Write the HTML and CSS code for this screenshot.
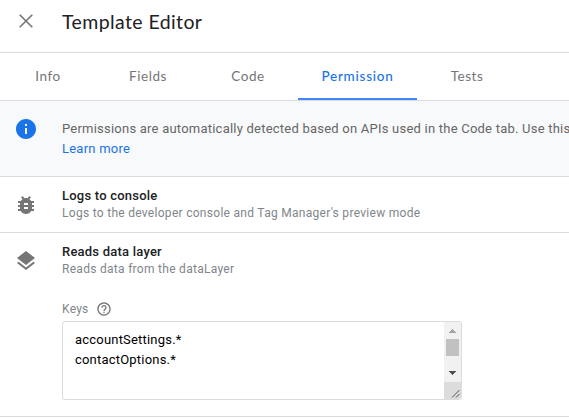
FILE: index.html
```html
<!DOCTYPE html>
<html lang="en">
<head>
<meta charset="utf-8">
<title>Template Editor</title>
<link rel="stylesheet" href="styles.css">
</head>
<body>
<header class="header">
  <svg class="close" width="14" height="14" viewBox="0 0 14 14"><path d="M.7.7l12.6 12.6M13.3.7L.7 13.3"/></svg>
  <h1 class="title">Template Editor</h1>
</header>
<nav class="tabs">
  <a class="tab first">Info</a>
  <a class="tab">Fields</a>
  <a class="tab">Code</a>
  <a class="tab active">Permission</a>
  <a class="tab">Tests</a>
</nav>
<section class="banner">
  <svg class="icon info" width="24" height="24" viewBox="0 0 24 24"><path d="M12 2C6.48 2 2 6.48 2 12s4.480 10 10 10 10-4.480 10-10S17.520 2 12 2zm1 15h-2v-6h2v6zm0-8h-2V7h2v2z"/></svg>
  <div class="message"><span class="copy">Permissions are automatically detected based on APIs used in the Code tab. Use this</span><a class="link">Learn more</a></div>
</section>
<section class="row">
  <svg class="icon" width="24" height="24" viewBox="0 0 24 24"><path d="M20 8h-2.810c-.45-.78-1.070-1.450-1.820-1.960L17 4.410 15.590 3l-2.170 2.170C12.960 5.060 12.490 5 12 5c-.49 0-.96.06-1.410.17L8.410 3 7 4.410l1.620 1.630C7.880 6.550 7.260 7.220 6.810 8H4v2h2.090c-.05.33-.09.66-.09 1v1H4v2h2v1c0 .34.04.67.09 1H4v2h2.810c1.040 1.790 2.970 3 5.190 3s4.150-1.210 5.190-3H20v-2h-2.090c.05-.33.09-.66.09-1v-1h2v-2h-2v-1c0-.34-.04-.67-.09-1H20V8zm-6 8h-4v-2h4v2zm0-4h-4v-2h4v2z"/></svg>
  <div class="details">
    <div class="name">Logs to console</div>
    <div class="summary">Logs to the developer console and Tag Manager's preview mode</div>
  </div>
</section>
<section class="row reads">
  <svg class="icon" width="24" height="24" viewBox="0 0 24 24"><path d="M11.990 18.540l-7.370-5.730L3 14.070l9 7 9-7-1.630-1.270-7.380 5.740zM12 16l7.360-5.730L21 9l-9-7-9 7 1.630 1.270L12 16z"/></svg>
  <div class="details">
    <div class="name">Reads data layer</div>
    <div class="summary">Reads data from the dataLayer</div>
    <div class="label"><span>Keys</span>
      <svg class="help" width="16" height="16" viewBox="0 0 24 24"><path d="M11 18h2v-2h-2v2zm1-16C6.480 2 2 6.480 2 12s4.480 10 10 10 10-4.480 10-10S17.520 2 12 2zm0 18c-4.410 0-8-3.590-8-8s3.590-8 8-8 8 3.590 8 8-3.590 8-8 8zm0-14c-2.210 0-4 1.790-4 4h2c0-1.100.9-2 2-2s2 .9 2 2c0 2-3 1.750-3 5h2c0-2.250 3-2.500 3-5 0-2.210-1.790-4-4-4z"/></svg>
    </div>
    <div class="field">
      <div class="keys"><div>accountSettings.*</div><div>contactOptions.*</div></div>
      <svg class="scrollbar" width="17" height="77" viewBox="0 0 17 77" shape-rendering="crispEdges">
        <path fill="#f1f1f1" d="M0 0h17v60H0z"/>
        <path fill="#c1c1c1" d="M2 17h13v17H2z"/>
        <path fill="#a3a3a3" d="M8 7h1v1h1v1h1v1h1v1H5v-1h1V9h1V8h1z"/>
        <path fill="#505050" d="M5 49h7v1h-1v1h-1v1H9v1H8v-1H7v-1H6v-1H5z"/>
        <path fill="#dcdcdc" d="M0 60h17v17H0z"/>
        <path shape-rendering="auto" fill="none" stroke="#505050" d="M8 75.500l7.500-7.500M12 75.500l3.500-3.500"/>
      </svg>
    </div>
  </div>
</section>
</body>
</html>
```
FILE: styles.css
```css
* { box-sizing: border-box; }
body {
  margin: 0;
  width: 569px;
  height: 419px;
  overflow: hidden;
  background: #fff;
  font: 13px/20px Roboto, sans-serif;
  letter-spacing: .25px;
  color: #202124;
}
.header {
  display: flex;
  align-items: center;
  gap: 29px;
  height: 53px;
  padding: 0 0 9px 19px;
  border-bottom: 1px solid #dadce0;
}
.close { fill: none; stroke: #757575; stroke-width: 1.6; margin-top: -1px; }
.title { margin: 0; font: 400 19.5px/28px Lato, sans-serif; letter-spacing: .4px; }
.tabs { display: flex; height: 48px; border-bottom: 1px solid #dadce0; }
.tab {
  min-width: 100px;
  padding-top: 1px;
  border-bottom: 2px solid transparent;
  text-align: center;
  font: 400 13.500px/45px Lato, sans-serif;
  letter-spacing: .55px;
  color: #757575;
}
.tab.first { min-width: 98px; padding-right: 2px; }
.tab.active {
  width: 119px;
  border-color: #4285f4;
  color: #1a73e8;
  font-weight: 500;
  letter-spacing: .75px;
}
.banner {
  display: flex;
  height: 76px;
  padding: 16px 0 0 14px;
  background: #f8f9fa;
  border-bottom: 1px solid #dadce0;
}
.icon { flex: none; fill: #757575; margin-right: 24px; }
.icon.info { fill: #1a73e8; }
.message { padding-top: 2px; white-space: nowrap; color: #666; letter-spacing: .225px; }
.copy, .link { display: block; }
.link { color: #1a73e8; }
.row {
  display: flex;
  height: 56px;
  padding: 16px 0 0 14px;
  border-bottom: 1px solid #dadce0;
}
.row.reads { height: 184px; }
.details { margin-top: -6px; }
.name { font-weight: 500; line-height: 18px; letter-spacing: .22px; }
.summary { font-size: 12px; line-height: 16px; letter-spacing: .29px; color: #80868b; }
.label {
  display: flex;
  align-items: center;
  gap: 7px;
  height: 16px;
  margin: 24px 0 4px;
  font-size: 12px;
  color: #80868b;
}
.help { fill: #757575; }
.field {
  display: flex;
  justify-content: space-between;
  width: 400px;
  height: 79px;
  border: 1px solid #dadce0;
  border-radius: 3px;
  overflow: hidden;
}
.keys { padding: 8px 12px; color: #000; letter-spacing: .2px; }
```
